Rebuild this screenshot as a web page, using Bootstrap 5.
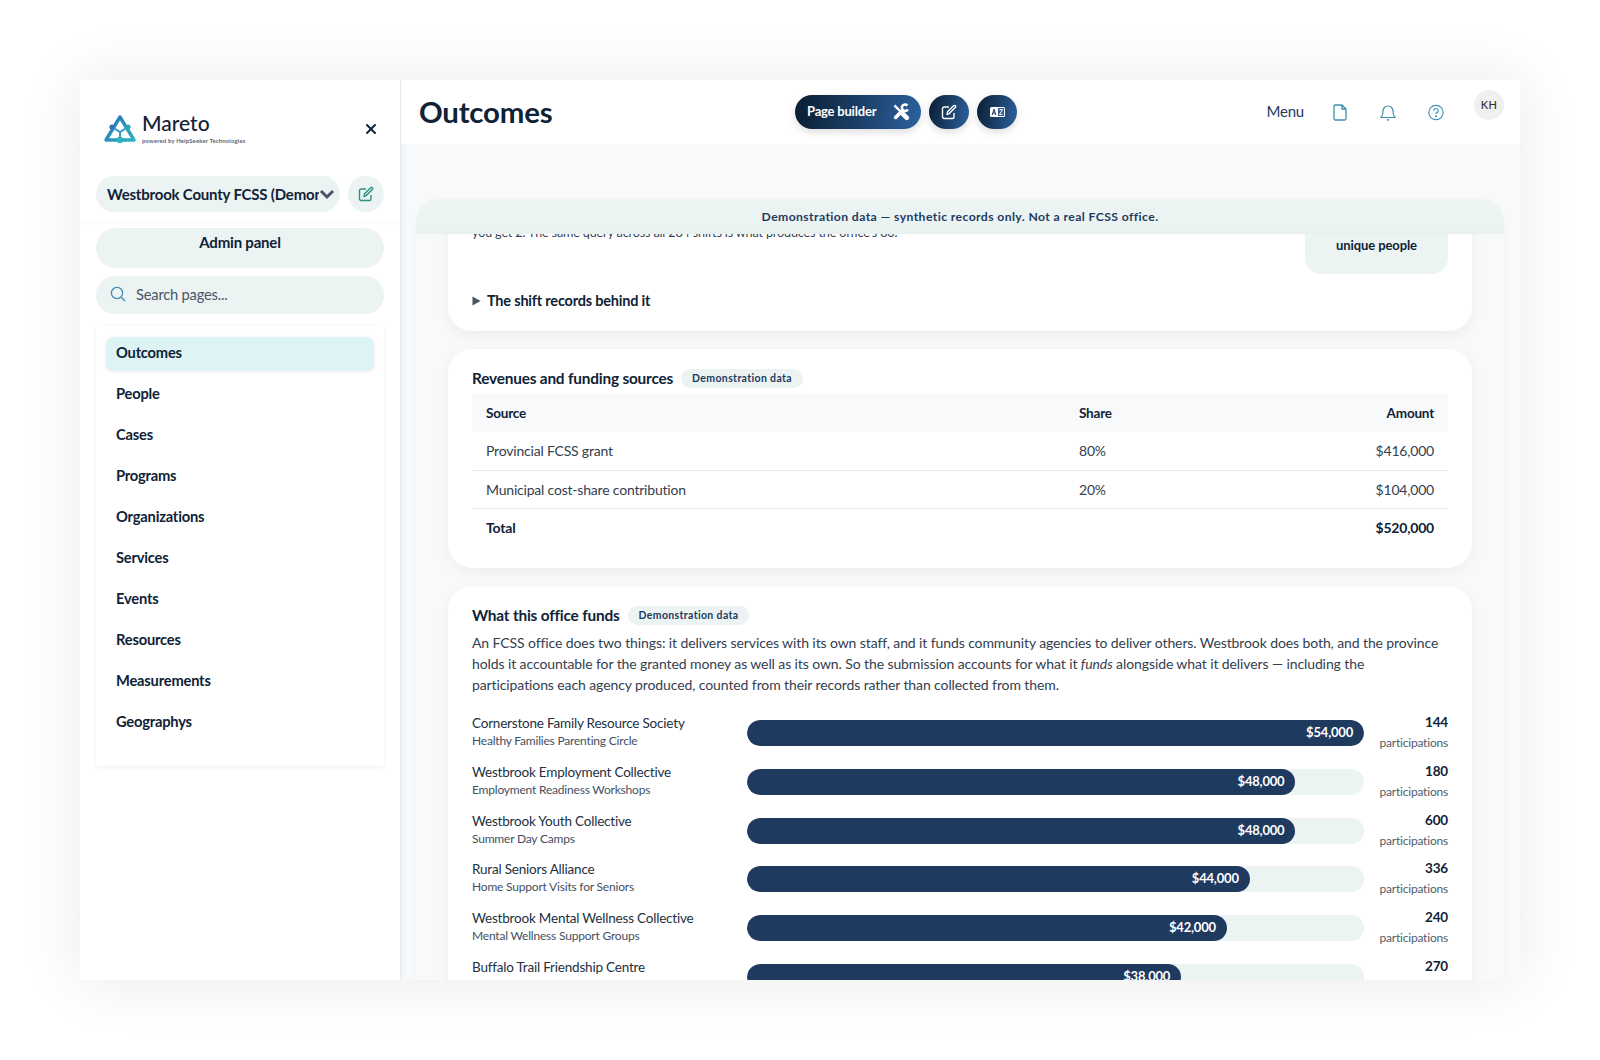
<!DOCTYPE html>
<html lang="en">
<head>
  <meta charset="UTF-8" />
  <meta name="viewport" content="width=device-width, initial-scale=1.0"/>
  <title>Outcomes - Mareto</title>
  <link href="https://cdn.jsdelivr.net/npm/bootstrap@5.3.0/dist/css/bootstrap.min.css" rel="stylesheet"/>
  <style>
    body {
      background: #fff;
      font-family: "Lato", "Liberation Sans", sans-serif;
      color: #0f2236;
      letter-spacing: -.2px;
      padding: 80px;
      height: 1060px;
      overflow: hidden;
    }
    .app-window {
      width: 1440px;
      height: 900px;
      background: #f8f9fb;
      overflow: hidden;
      box-shadow: 0 0 60px rgba(0,0,0,.09);
    }
    .side-col {
      width: 321px;
      flex: none;
      background: #fff;
      border-right: 1px solid #e9ecef;
      box-shadow: 2px 0 6px rgba(0,0,0,.04);
    }
    .side-top { padding: 25px 16px 0 16px; height: 140px; box-shadow: 0 4px 6px rgba(0,0,0,.015); }
    .logo-row { padding: 0 8px 0 8px; height: 48px; }
    .logo-text { margin-top: -3px; margin-left: -2px; }
    .logo-name { font-size: 21px; line-height: 24px; font-weight: 500; color: #0f2236; letter-spacing: 0; }
    .logo-sub { font-size: 5.9px; line-height: 8px; font-weight: 700; color: #5b6675; letter-spacing: .18px; margin-top: 2px; }
    .close-x { margin-right: -2px; }
    .org-row { margin-top: 23px; }
    .org-pick {
      width: 244px; height: 36px; background: #ecf3f3; border-radius: 18px;
      padding: 0 5px 0 11px; font-size: 15px; font-weight: 700; white-space: nowrap;
    }
    .org-pick span { overflow: hidden; width: 212px; }
    .round-tint { width: 36px; height: 36px; background: #ecf3f3; border-radius: 50%; }
    .side-body { padding: 8px 16px 0 16px; }
    .admin-pill {
      height: 40px; background: #ecf3f3; border-radius: 20px; font-size: 15px; font-weight: 700;
      text-align: center; padding-top: 3px; color: #0f2236;
    }
    .search-pill {
      height: 38px; background: #ecf3f3; border-radius: 19px; margin-top: 8px;
      padding: 0 14px 2px 14px; gap: 10px; font-size: 14.7px; color: #4a5568;
    }
    .page-list {
      margin-top: 12px; padding: 11px 10px 19px 10px; background: #fff;
      box-shadow: 0 1px 5px rgba(0,0,0,.07);
    }
    .page-link-item {
      display: block; height: 34px; line-height: 30px; padding-left: 10px; margin-bottom: 7px;
      font-size: 14.7px; font-weight: 700; color: #0f2236; text-decoration: none; border-radius: 7px;
    }
    .page-link-item.is-on { background: #def3f4; box-shadow: 0 1px 4px rgba(0,0,0,.07); }
    .top-head { height: 64px; background: #fff; padding: 0 16px 0 18px; flex: none; position: relative; }
    .page-title { font-size: 29.4px; font-weight: 700; margin: 0; color: #0f2236; line-height: 63px; }
    .head-mid { position: absolute; left: 394px; top: 15px; gap: 8px; }
    .grad-btn {
      height: 34px; border: 0; border-radius: 17px; color: #fff; letter-spacing: -.2px;
      background: linear-gradient(100deg, #0c2036 5%, #2c619e 100%);
      box-shadow: 0 3px 8px rgba(0,0,0,.14);
      display: flex; align-items: center; justify-content: center;
    }
    .grad-btn.wide { width: 126px; padding: 0 11px 0 12px; justify-content: space-between; font-size: 13px; font-weight: 700; }
    .grad-btn.circ { width: 40px; }
    .head-right { position: absolute; right: 16px; top: 0; height: 64px; }
    .menu-word { font-size: 15px; color: #1f3a5f; margin-right: 28px; margin-top: -1px; }
    .head-ic { margin-right: 32px; width: 16px; display: flex; justify-content: center; }
    .head-ic.last { margin-right: 30px; }
    .avatar-kh {
      width: 30px; height: 30px; border-radius: 50%; background: #f0f0f0; color: #333;
      font-size: 11px; font-weight: 500; letter-spacing: .4px; text-align: center; line-height: 30px;
      margin-top: -14px; align-self: center;
    }
    .main-col { flex: 1; min-width: 0; }
    .main-area { flex: 1; min-height: 0; padding: 56px 16px 0 15px; }
    .demo-banner {
      height: 34px; flex: none; background: #ecf3f3; border-radius: 24px 24px 0 0;
      font-size: 12.2px; font-weight: 700; color: #1f3a5f; letter-spacing: .4px; text-align: center; line-height: 34px;
      box-shadow: 0 -1px 3px rgba(0,0,0,.04);
    }
    .scroll-box { flex: 1; min-height: 0; overflow: hidden; padding: 0 32px; box-shadow: 0 0 12px rgba(0,0,0,.03); }
    .panel {
      background: #fff; border-radius: 24px; padding: 18px 24px 22px 24px; margin-bottom: 18px;
      box-shadow: 0 4px 14px rgba(0,0,0,.05);
    }
    .panel-first { margin-top: -60px; height: 157px; padding-top: 0; position: relative; }
    .shift-line { font-size: 12.6px; letter-spacing: -.15px; color: #33404f; line-height: 20px; padding-top: 49px; height: 71px; white-space: nowrap; }
    .stat-tile {
      position: absolute; right: 24px; top: 0; width: 143px; height: 100px; background: #ecf3f3;
      border-radius: 16px; text-align: center; font-size: 13px; font-weight: 700; padding-top: 62px; letter-spacing: -.1px;
    }
    .shift-toggle { font-size: 14.5px; font-weight: 700; margin-top: 45px; gap: 6px; }
    .panel-head { font-size: 15.4px; font-weight: 700; gap: 8px; line-height: 22px; }
    .demo-tag {
      background: #ecf3f3; border-radius: 10px; height: 19px; line-height: 19px; padding: 0 11px; margin-top: 1px;
      font-size: 10.5px; font-weight: 700; color: #1f3a5f; letter-spacing: .36px;
    }
    .fund-table { width: 100%; font-size: 14px; margin: 5px 0 0 0; color: #33404f; table-layout: fixed; }
    .fund-table th, .fund-table td { padding: 0 14px; height: 38px; border-bottom: 1px solid #e9ecef; }
    .fund-table thead th { background: #f8f9fb; font-size: 13.5px; font-weight: 700; color: #0f2236; border: 0; height: 38px; }
    .fund-table tr:last-child td { border: 0; font-weight: 700; color: #0f2236; }
    .source-col { width: 593px; }
    .share-col { width: 180px; }
    .intro-copy { font-size: 14px; letter-spacing: -.1px; line-height: 21px; color: #33404f; margin: 6px 0 22px 0; max-width: 970px; }
    .fund-row { display: flex; align-items: flex-start; height: 48.8px; }
    .fund-name { width: 275px; flex: none; font-size: 13.5px; line-height: 18px; color: #22303f; margin-top: -3px; }
    .fund-name div + div { font-size: 12px; line-height: 17px; color: #44505f; }
    .bar-track { width: 617px; flex: none; height: 26px; background: #ecf3f3; border-radius: 13px; margin-top: 3px; overflow: hidden; }
    .bar-fill {
      height: 26px; background: #1f3a5f; border-radius: 13px; color: #fff; font-size: 13px; font-weight: 700;
      text-align: right; padding-right: 11px; line-height: 24px;
    }
    .fund-count { flex: 1; text-align: right; font-size: 13.5px; font-weight: 700; color: #0f2236; line-height: 16px; margin-top: -3px; }
    .fund-count div { font-size: 12px; font-weight: 400; color: #505c6b; line-height: 16px; margin-top: 5px; }
  </style>
</head>
<body>
  <div class="app-window d-flex">
    <!-- Sidebar -->
    <aside class="side-col d-flex flex-column">
      <div class="side-top">
        <div class="logo-row d-flex align-items-center justify-content-between">
          <div class="d-flex align-items-center gap-2">
            <svg width="32" height="30" viewBox="0 0 32 30">
              <defs><linearGradient id="logoGrad" x1="0" y1="0" x2="1" y2="1"><stop offset="0" stop-color="#2a6fb5"/><stop offset="1" stop-color="#2bb3c0"/></linearGradient></defs>
              <path d="M16 3 L30 26 H2 Z" fill="none" stroke="url(#logoGrad)" stroke-width="3.4" stroke-linejoin="round"/>
              <path d="M8 13 L16 18 L24 13 M16 18 V26" fill="none" stroke="#2a9fc0" stroke-width="2"/>
              <circle cx="8" cy="13" r="2.6" fill="#2a78b8"/><circle cx="24" cy="13" r="2.6" fill="#2ba5bd"/><circle cx="16" cy="26" r="3.2" fill="#2bb3c0"/>
            </svg>
            <div class="logo-text">
              <div class="logo-name">Mareto</div>
              <div class="logo-sub">powered by HelpSeeker Technologies</div>
            </div>
          </div>
          <svg class="close-x" width="14" height="14" viewBox="0 0 14 14"><path d="M3 3 L11 11 M11 3 L3 11" stroke="#0f2236" stroke-width="2" stroke-linecap="round"/></svg>
        </div>
        <div class="org-row d-flex align-items-center gap-2">
          <div class="org-pick d-flex align-items-center justify-content-between">
            <span>Westbrook County FCSS (Demonstration)</span>
            <svg width="16" height="12" viewBox="0 0 16 12"><path d="M2 3 L8 9 L14 3" fill="none" stroke="#4a5568" stroke-width="3"/></svg>
          </div>
          <div class="round-tint d-flex align-items-center justify-content-center">
            <svg width="16" height="16" viewBox="0 0 16 16" fill="none" stroke="#2a9080" stroke-width="1.4"><path d="M13 9 V13 a1.5 1.5 0 0 1 -1.5 1.5 H3 A1.5 1.5 0 0 1 1.5 13 V4.5 A1.5 1.5 0 0 1 3 3 H8"/><path d="M6 10.5 L6.6 7.8 L12.6 1.8 a1.2 1.2 0 0 1 1.7 1.7 L8.3 9.6 Z" stroke-linejoin="round"/></svg>
          </div>
        </div>
      </div>
      <div class="side-body">
        <div class="admin-pill">Admin panel</div>
        <div class="search-pill d-flex align-items-center">
          <svg width="16" height="16" viewBox="0 0 16 16" fill="none" stroke="#3d8fb5" stroke-width="1.3"><circle cx="7" cy="7" r="5.6"/><path d="M11.2 11.2 L15 15"/></svg>
          <span>Search pages...</span>
        </div>
        <nav class="page-list">
          <a class="page-link-item is-on" href="#">Outcomes</a>
          <a class="page-link-item" href="#">People</a>
          <a class="page-link-item" href="#">Cases</a>
          <a class="page-link-item" href="#">Programs</a>
          <a class="page-link-item" href="#">Organizations</a>
          <a class="page-link-item" href="#">Services</a>
          <a class="page-link-item" href="#">Events</a>
          <a class="page-link-item" href="#">Resources</a>
          <a class="page-link-item" href="#">Measurements</a>
          <a class="page-link-item" href="#">Geographys</a>
        </nav>
      </div>
    </aside>

    <!-- Main -->
    <div class="main-col d-flex flex-column">
      <header class="top-head">
        <h1 class="page-title">Outcomes</h1>
        <div class="head-mid d-flex">
          <button class="grad-btn wide">Page builder
            <svg width="18" height="18" viewBox="0 0 18 18" fill="none" stroke="#fff" stroke-linecap="round">
              <path d="M2.4 2.4 L9 9" stroke-width="2.4" stroke-linecap="butt"/>
              <path d="M11 11 L14.8 14.8" stroke-width="4.6"/>
              <path d="M3.6 14.4 L10.6 7.4" stroke-width="3.6"/>
              <path d="M15.4 2.6 A3.2 3.2 0 1 0 15.8 6.4" stroke-width="2.6" stroke-linecap="butt"/>
            </svg>
          </button>
          <button class="grad-btn circ" aria-label="Edit">
            <svg width="16" height="16" viewBox="0 0 16 16" fill="none" stroke="#fff" stroke-width="1.4"><path d="M13 9 V13 a1.5 1.5 0 0 1 -1.5 1.5 H3 A1.5 1.5 0 0 1 1.5 13 V4.5 A1.5 1.5 0 0 1 3 3 H8"/><path d="M6 10.5 L6.6 7.8 L12.6 1.8 a1.2 1.2 0 0 1 1.7 1.7 L8.3 9.6 Z" stroke-linejoin="round"/></svg>
          </button>
          <button class="grad-btn circ" aria-label="Translate">
            <svg width="15" height="10" viewBox="0 0 15 10"><rect x="0" y="0" width="15" height="10" rx="1.5" fill="#fff"/><path d="M8 1 H14 V9 H8 Z" fill="#2c5a90"/><path d="M2.2 8 L4 2.2 L5.8 8 M2.9 6 H5.1" fill="none" stroke="#1a3555" stroke-width="1"/><path d="M9.4 2.6 H12.6 L9.4 7.4 H12.6" fill="none" stroke="#fff" stroke-width="1"/></svg>
          </button>
        </div>
        <div class="head-right d-flex align-items-center">
          <span class="menu-word">Menu</span>
          <span class="head-ic">
            <svg width="14" height="17" viewBox="0 0 14 17" fill="none" stroke="#3f8fb0" stroke-width="1.3"><path d="M2 1 H9 L13 5 V14.5 A1.5 1.5 0 0 1 11.5 16 H2.5 A1.5 1.5 0 0 1 1 14.5 V2 A1 1 0 0 1 2 1 Z M9 1 V5 H13"/></svg>
          </span>
          <span class="head-ic">
            <svg width="16" height="17" viewBox="0 0 16 17" fill="none" stroke="#3f8fb0" stroke-width="1.2"><path d="M1 13.5 H15 C13.5 12 13 11 13 7 A5 5 0 0 0 3 7 C3 11 2.5 12 1 13.5 Z"/><path d="M7 15.5 Q8 16.5 9 15.5"/></svg>
          </span>
          <span class="head-ic last">
            <svg width="17" height="17" viewBox="0 0 17 17" fill="none" stroke="#3f8fb0" stroke-width="1.2"><circle cx="8.5" cy="8.5" r="7.6"/><path d="M6.2 6.6 A2.3 2.3 0 1 1 9 8.8 Q8.5 9.1 8.5 10.2"/><circle cx="8.5" cy="12.4" r=".5"/></svg>
          </span>
          <div class="avatar-kh">KH</div>
        </div>
      </header>

      <div class="main-area d-flex flex-column">
        <div class="demo-banner">Demonstration data — synthetic records only. Not a real FCSS office.</div>
        <div class="scroll-box">
          <section class="panel panel-first">
            <div class="shift-line">you get 2. The same query across all 284 shifts is what produces the office's 86.</div>
            <div class="stat-tile">unique people</div>
            <div class="shift-toggle d-flex align-items-center">
              <svg width="9" height="10" viewBox="0 0 9 10"><path d="M0.5 0.5 L8.5 5 L0.5 9.5 Z" fill="#4a5568"/></svg>
              <span>The shift records behind it</span>
            </div>
          </section>

          <section class="panel">
            <div class="panel-head d-flex align-items-center">Revenues and funding sources <span class="demo-tag">Demonstration data</span></div>
            <table class="fund-table">
              <thead><tr><th class="source-col">Source</th><th class="share-col">Share</th><th class="text-end">Amount</th></tr></thead>
              <tbody>
                <tr><td>Provincial FCSS grant</td><td>80%</td><td class="text-end">$416,000</td></tr>
                <tr><td>Municipal cost-share contribution</td><td>20%</td><td class="text-end">$104,000</td></tr>
                <tr><td>Total</td><td></td><td class="text-end">$520,000</td></tr>
              </tbody>
            </table>
          </section>

          <section class="panel">
            <div class="panel-head d-flex align-items-center">What this office funds <span class="demo-tag">Demonstration data</span></div>
            <p class="intro-copy">An FCSS office does two things: it delivers services with its own staff, and it funds community agencies to deliver others. Westbrook does both, and the province holds it accountable for the granted money as well as its own. So the submission accounts for what it <em>funds</em> alongside what it delivers — including the participations each agency produced, counted from their records rather than collected from them.</p>
            <div id="fundRows"></div>
          </section>
        </div>
      </div>
    </div>
  </div>

  <script src="https://cdn.jsdelivr.net/npm/bootstrap@5.3.0/dist/js/bootstrap.bundle.min.js"></script>
  <script>
    const funds = [
      { name: 'Cornerstone Family Resource Society', program: 'Healthy Families Parenting Circle', amount: 54000, count: 144 },
      { name: 'Westbrook Employment Collective', program: 'Employment Readiness Workshops', amount: 48000, count: 180 },
      { name: 'Westbrook Youth Collective', program: 'Summer Day Camps', amount: 48000, count: 600 },
      { name: 'Rural Seniors Alliance', program: 'Home Support Visits for Seniors', amount: 44000, count: 336 },
      { name: 'Westbrook Mental Wellness Collective', program: 'Mental Wellness Support Groups', amount: 42000, count: 240 },
      { name: 'Buffalo Trail Friendship Centre', program: 'Community Kitchen', amount: 38000, count: 270 }
    ];
    const fundRows = document.getElementById('fundRows');
    funds.forEach((f) => {
      const pct = f.amount / 54000 * 100;
      fundRows.innerHTML += `
        <div class="fund-row">
          <div class="fund-name"><div>${f.name}</div><div>${f.program}</div></div>
          <div class="bar-track"><div class="bar-fill" style="width:${pct}%">$${f.amount.toLocaleString('en-US')}</div></div>
          <div class="fund-count">${f.count}<div>participations</div></div>
        </div>`;
    });
  </script>
</body>
</html>
